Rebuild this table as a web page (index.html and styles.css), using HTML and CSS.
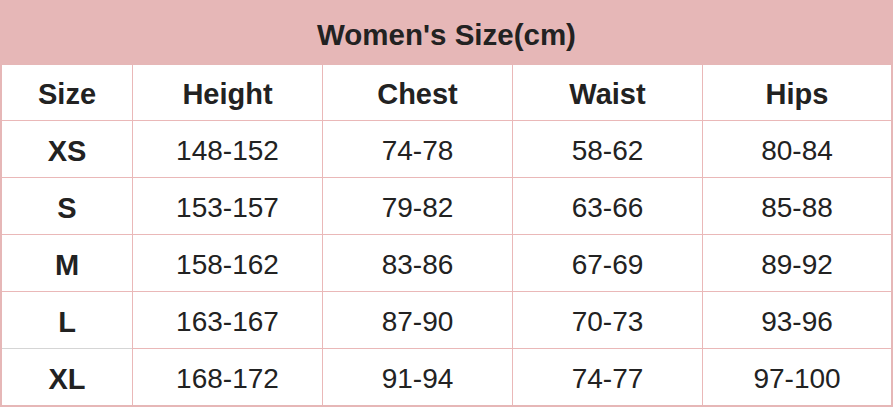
FILE: index.html
```html
<!DOCTYPE html>
<html>
<head>
<meta charset="utf-8">
<link rel="stylesheet" href="styles.css">
</head>
<body>
<div class="chart">
  <div class="title">Women's Size(cm)</div>
  <div class="grid">
    <div class="cell head first">Size</div>
    <div class="cell head">Height</div>
    <div class="cell head">Chest</div>
    <div class="cell head">Waist</div>
    <div class="cell head">Hips</div>

    <div class="cell first">XS</div>
    <div class="cell">148-152</div>
    <div class="cell">74-78</div>
    <div class="cell">58-62</div>
    <div class="cell">80-84</div>

    <div class="cell first">S</div>
    <div class="cell">153-157</div>
    <div class="cell">79-82</div>
    <div class="cell">63-66</div>
    <div class="cell">85-88</div>

    <div class="cell first">M</div>
    <div class="cell">158-162</div>
    <div class="cell">83-86</div>
    <div class="cell">67-69</div>
    <div class="cell">89-92</div>

    <div class="cell first">L</div>
    <div class="cell">163-167</div>
    <div class="cell">87-90</div>
    <div class="cell">70-73</div>
    <div class="cell">93-96</div>

    <div class="cell first last">XL</div>
    <div class="cell last">168-172</div>
    <div class="cell last">91-94</div>
    <div class="cell last">74-77</div>
    <div class="cell last">97-100</div>
  </div>
</div>
</body>
</html>
```
FILE: styles.css
```css
html, body {
  margin: 0;
  padding: 0;
  background: #ffffff;
}
.chart {
  width: 893px;
  height: 407px;
  box-sizing: border-box;
  border-left: 2px solid #e6b7b7;
  border-right: 2px solid #e6b7b7;
  border-bottom: 2px solid #e6b7b7;
  font-family: "Liberation Sans", Arial, sans-serif;
  color: #222222;
}
.title {
  height: 65px;
  margin: 0 -2px;
  background: #e6b7b7;
  display: flex;
  align-items: center;
  justify-content: center;
  font-weight: bold;
  font-size: 29.5px;
  padding-top: 4px;
  box-sizing: border-box;
}
.grid {
  display: grid;
  grid-template-columns: 130px 190px 190px 190px 189px;
  grid-template-rows: 56px 57px 57px 57px 57px 56px;
}
.cell {
  display: flex;
  align-items: center;
  justify-content: center;
  font-size: 28px;
  border-left: 1px solid #eab8b8;
  border-bottom: 1px solid #eab8b8;
  padding-top: 4px;
}
.cell.head {
  font-weight: bold;
  font-size: 29px;
  padding-top: 3px;
}
.cell.first {
  border-left: none;
  font-weight: bold;
  font-size: 29px;
}
.cell.last {
  border-bottom: none;
}
.grid .cell:nth-child(21) {
  border-bottom-color: #d5d5d5;
}
```
